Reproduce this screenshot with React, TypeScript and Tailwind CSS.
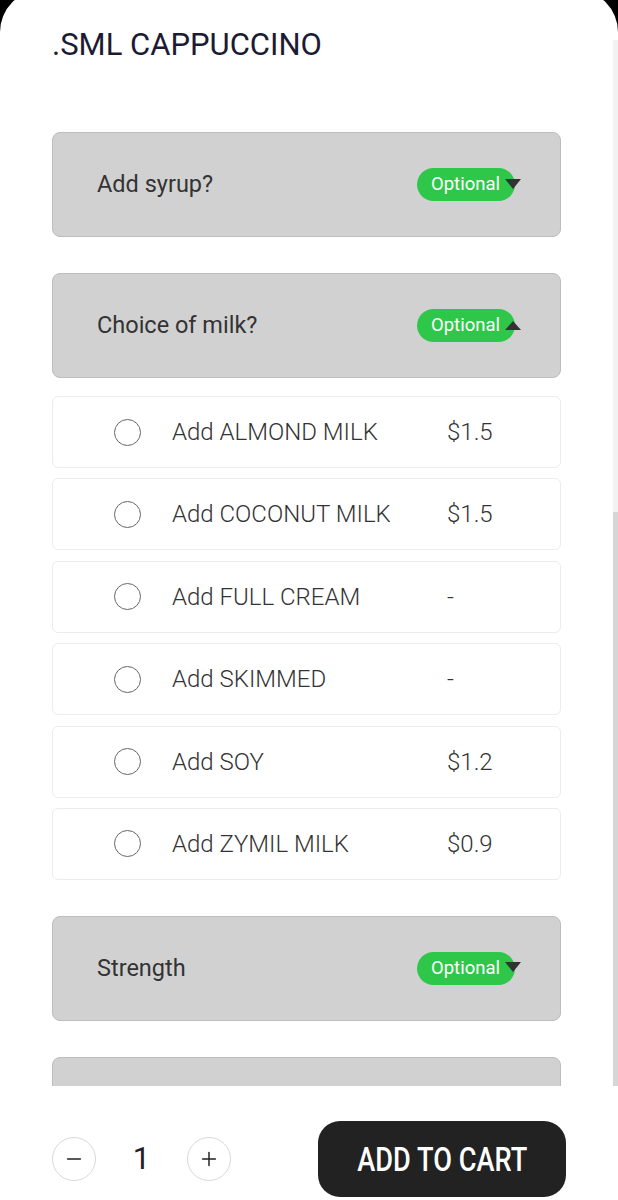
import React from "react";
import { Minus, Plus } from "lucide-react";

const font = { fontFamily: "Roboto, 'Noto Sans', sans-serif" };

interface Choice {
  label: string;
  price: string;
}

const milks: Choice[] = [
  { label: "Add ALMOND MILK", price: "$1.5" },
  { label: "Add COCONUT MILK", price: "$1.5" },
  { label: "Add FULL CREAM", price: "-" },
  { label: "Add SKIMMED", price: "-" },
  { label: "Add SOY", price: "$1.2" },
  { label: "Add ZYMIL MILK", price: "$0.9" },
];

function Caret({ up }: { up?: boolean }) {
  return (
    <svg width="16" height="10" viewBox="0 0 16 10" className="-ml-[10px] mb-[2px]">
      {up ? <path d="M0 10 L8 1 L16 10 Z" fill="#333" /> : <path d="M0 0 L16 0 L8 10 Z" fill="#333" />}
    </svg>
  );
}

function GroupHeader({ title, open }: { title?: string; open?: boolean }) {
  return (
    <div className="h-[105px] shrink-0 rounded-[8px] border border-[#bdbdbd] bg-[#d1d1d1] pl-[44px] pr-[39px] flex items-center justify-between">
      {title && (
        <>
          <span className="text-[23.5px] text-[#333]">{title}</span>
          <div className="flex items-center">
            <span className="h-[33px] w-[98px] rounded-full bg-[#2fc74a] pl-[14px] flex items-center text-[18.5px] text-white">
              Optional
            </span>
            <Caret up={open} />
          </div>
        </>
      )}
    </div>
  );
}

function MilkRow({ label, price }: Choice) {
  return (
    <div className="h-[72px] shrink-0 rounded-[6px] border border-[#ececec] bg-white pl-[61px] flex items-center text-[24px] font-light text-[#333]">
      <span className="w-[27px] h-[27px] rounded-full border-[1.5px] border-[#666]" />
      <span className="ml-[31px] w-[275px]">{label}</span>
      <span>{price}</span>
    </div>
  );
}

export default function App() {
  return (
    <div className="w-[618px] h-[1200px] bg-black overflow-hidden" style={font}>
      <div className="-mt-[10px] h-[1210px] bg-white rounded-t-[42px] overflow-hidden flex flex-col">
        <div className="h-[1096px] flex shrink-0">
          <div className="flex-1 overflow-hidden px-[52px] pt-[38px] flex flex-col">
            <h1 className="text-[31px] leading-[34px] text-[#1d1b33] whitespace-nowrap">.SML CAPPUCCINO</h1>
            <div className="mt-[70px] flex flex-col gap-[36px]">
              <GroupHeader title="Add syrup?" />
              <div className="flex flex-col">
                <GroupHeader title="Choice of milk?" open />
                <div className="mt-[18px] flex flex-col gap-[10.4px]">
                  {milks.map((m) => (
                    <MilkRow key={m.label} {...m} />
                  ))}
                </div>
              </div>
              <GroupHeader title="Strength" />
              <GroupHeader />
            </div>
          </div>
          <div className="w-[5px] pt-[50px] flex flex-col">
            <div className="flex-1 bg-[#f2f2f2] flex flex-col">
              <div className="mt-auto h-[574px] bg-[#d6d6d6]" />
            </div>
          </div>
        </div>
        <div className="flex-1 px-[52px] pt-[35px]">
          <div className="h-[76px] flex items-center justify-between">
            <div className="flex items-center">
              <button className="w-[44px] h-[44px] rounded-full border-[1.5px] border-[#d9d9d9] flex items-center justify-center">
                <Minus size={22} strokeWidth={1.6} color="#222" />
              </button>
              <span className="w-[91px] text-center text-[31px] text-[#222]">1</span>
              <button className="w-[44px] h-[44px] rounded-full border-[1.5px] border-[#d9d9d9] flex items-center justify-center">
                <Plus size={22} strokeWidth={1.6} color="#222" />
              </button>
            </div>
            <button className="w-[248px] h-[76px] rounded-[22px] bg-[#222] flex items-center justify-center">
              <span className="inline-block text-[34px] font-medium text-white scale-x-[0.8] whitespace-nowrap">
                ADD TO CART
              </span>
            </button>
          </div>
        </div>
      </div>
    </div>
  );
}
